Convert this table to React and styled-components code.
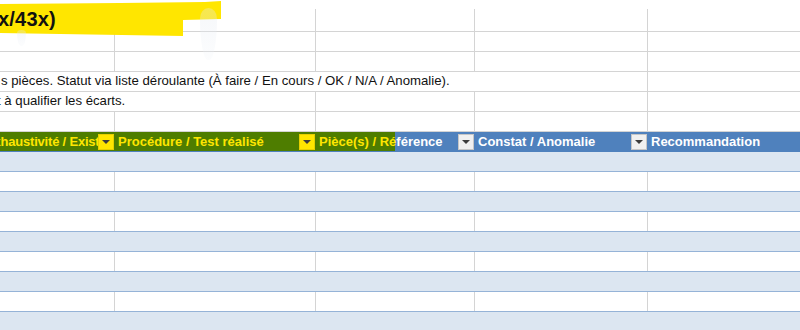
import React from 'react';
import styled, { createGlobalStyle } from 'styled-components';

const GlobalStyle = createGlobalStyle`
  html, body { margin: 0; padding: 0; background: #fff; }
  body { font-family: "Liberation Sans", Arial, sans-serif; }
`;

const COLS = [115, 201, 159, 173, 160];
const GRID = '#d4d4d4';
const TABLE_LINE = '#95b3d7';
const GREEN = '#4e7d00';
const BLUE = '#4f81bd';
const YELLOW = '#ffe600';

const Sheet = styled.div`
  position: relative;
  width: 800px;
  height: 330px;
  overflow: hidden;
  background: #fff;
`;

const TopStrip = styled.div`
  height: 9px;
`;

const Row = styled.div`
  display: flex;
  box-sizing: border-box;
  height: ${p => p.h || 20}px;
  background: ${p => p.bg || '#fff'};
  border-bottom: 1px solid ${p => p.line || GRID};
`;

const Cell = styled.div`
  flex: 0 0 ${p => p.w}px;
  min-width: 0;
  box-sizing: border-box;
  display: flex;
  align-items: flex-end;
  padding-bottom: 3px;
  white-space: nowrap;
  font-size: 13.2px;
  color: #111;
  border-right: 1px solid ${p => (p.open ? 'transparent' : p.line || GRID)};
`;

const Spill = styled.span`
  margin-left: ${p => p.indent || 0}px;
  position: relative;
  z-index: 1;
`;

const HeadCell = styled.div`
  flex: 0 0 ${p => p.w}px;
  min-width: 0;
  box-sizing: border-box;
  display: flex;
  align-items: center;
  padding-right: 1px;
  background: ${p => p.bg};
  font-size: 13px;
  font-weight: bold;
  color: ${p => (p.green ? YELLOW : '#fff')};
  white-space: nowrap;
  overflow: hidden;
`;

const HeadText = styled.span`
  flex: 1;
  min-width: 0;
  overflow: hidden;
  padding-left: ${p => p.pad ?? 3}px;
  text-indent: ${p => p.indent || 0}px;
  letter-spacing: ${p => p.tight ? '-0.2px' : '0'};
`;

const Yellow = styled.span`
  color: ${YELLOW};
`;

const Filter = styled.span`
  flex: 0 0 16px;
  height: 16px;
  box-sizing: border-box;
  display: flex;
  align-items: center;
  justify-content: center;
  background: ${p => (p.green ? YELLOW : '#f0f0f0')};
  border: 1px solid ${p => (p.green ? '#e6cf00' : '#c6c6c6')};
  &::after {
    content: '';
    border-left: 4px solid transparent;
    border-right: 4px solid transparent;
    border-top: 4px solid #3c3c3c;
    margin-top: 1px;
  }
`;

const Highlight = styled.div`
  position: absolute;
  left: 0;
  top: 0;
  width: 222px;
  height: 38px;
  background: ${YELLOW};
  clip-path: polygon(0 4px, 120px 3px, 205px 2px, 221px 1px, 221px 19px, 183px 20px, 183px 36px, 60px 34px, 0 33px);
  z-index: 3;
`;

const Title = styled.div`
  padding: 8px 0 0 0;
  margin-left: -2px;
  font-size: 20px;
  font-weight: bold;
  color: #111;
  letter-spacing: 0.2px;
`;

const Drip = styled.div`
  position: absolute;
  left: ${p => p.x}px;
  top: ${p => p.y}px;
  width: ${p => p.w}px;
  height: ${p => p.h}px;
  border-radius: 50% 50% 45% 45% / 20% 20% 80% 80%;
  background: linear-gradient(to bottom, rgba(228, 234, 242, 0.35), rgba(238, 242, 247, 0.2));
  z-index: 4;
`;

const blank = (open = []) =>
  COLS.map((w, i) => <Cell key={i} w={w} open={open.includes(i)} />);

const App = () => {
  const dataRows = Array.from({ length: 9 }, (_, i) => i);
  return (
    <>
      <GlobalStyle />
      <Sheet>
        <TopStrip />
        <Row h={23}>{blank()}</Row>
        <Row>{blank()}</Row>
        <Row>{blank()}</Row>
        <Row>
          <Cell w={COLS[0]} open>
            <Spill indent={1}>
              s pièces. Statut via liste déroulante (À faire / En cours / OK / N/A / Anomalie).
            </Spill>
          </Cell>
          <Cell w={COLS[1]} open />
          <Cell w={COLS[2]} open />
          <Cell w={COLS[3]} />
          <Cell w={COLS[4]} />
        </Row>
        <Row>
          <Cell w={COLS[0]} open>
            <Spill indent={-3}>t à qualifier les écarts.</Spill>
          </Cell>
          <Cell w={COLS[1]} />
          <Cell w={COLS[2]} />
          <Cell w={COLS[3]} />
          <Cell w={COLS[4]} />
        </Row>
        <Row>{blank()}</Row>
        <Row bg={BLUE} line={BLUE}>
          <HeadCell w={COLS[0]} bg={GREEN} green>
            <HeadText pad={0} indent={-15} tight>Exhaustivité / Existence</HeadText>
            <Filter green />
          </HeadCell>
          <HeadCell w={COLS[1]} bg={GREEN} green>
            <HeadText>Procédure / Test réalisé</HeadText>
            <Filter green />
          </HeadCell>
          <HeadCell w={COLS[2]} bg={`linear-gradient(to right, ${GREEN} 79px, ${BLUE} 79px)`}>
            <HeadText>
              <Yellow>Pièce(s) / Ré</Yellow>férence
            </HeadText>
            <Filter />
          </HeadCell>
          <HeadCell w={COLS[3]} bg={BLUE}>
            <HeadText>Constat / Anomalie</HeadText>
            <Filter />
          </HeadCell>
          <HeadCell w={COLS[4]} bg={BLUE}>
            <HeadText>Recommandation</HeadText>
          </HeadCell>
        </Row>
        {dataRows.map(i =>
          i % 2 === 0 ? (
            <Row key={i} bg="#dce6f1" line={TABLE_LINE} />
          ) : (
            <Row key={i} line={TABLE_LINE}>{blank()}</Row>
          )
        )}
        <Highlight>
          <Title>x/43x)</Title>
        </Highlight>
        <Drip x={17} y={30} w={9} h={16} />
        <Drip x={200} y={8} w={17} h={52} />
      </Sheet>
    </>
  );
};

export default App;
